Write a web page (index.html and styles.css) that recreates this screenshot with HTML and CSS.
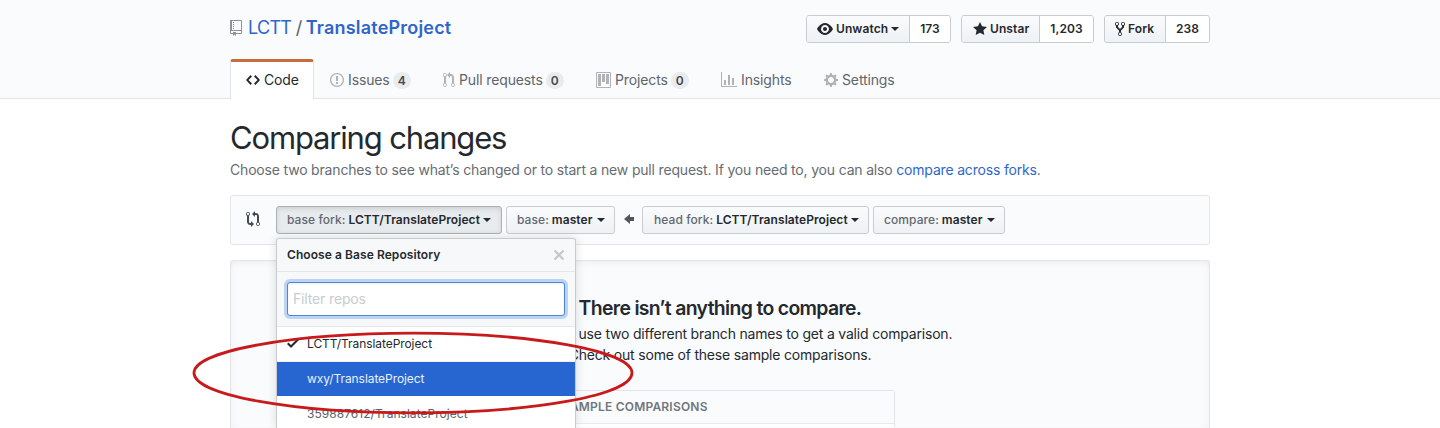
FILE: index.html
```html
<!DOCTYPE html>
<html lang="en">
<head>
<meta charset="utf-8">
<title>Comparing changes · LCTT/TranslateProject</title>
<link rel="stylesheet" href="styles.css">
</head>
<body>
<header class="repohead">
  <div class="container">
    <div class="repo-top">
      <h1 class="repo-title">
        <svg class="icon repo-icon" width="12" height="16" viewBox="0 0 12 16"><path fill-rule="evenodd" d="M4 9H3V8h1v1zm0-3H3v1h1V6zm0-2H3v1h1V4zm0-2H3v1h1V2zm8-1v12c0 .55-.45 1-1 1H6v2l-1.5-1.5L3 16v-2H1c-.55 0-1-.45-1-1V1c0-.55.45-1 1-1h10c.55 0 1 .45 1 1zm-1 10H1v2h2v-1h3v1h5v-2zm0-10H2v9h9V1z"/></svg>
        <a class="owner">LCTT</a><span class="slash">/</span><a class="name">TranslateProject</a>
      </h1>
      <div class="actions">
        <div class="action watch"><span class="action-btn"><svg class="icon" width="16" height="16" viewBox="0 0 16 16"><path fill-rule="evenodd" d="M8.06 2C3 2 0 8 0 8s3 6 8.06 6C13 14 16 8 16 8s-3-6-7.94-6zM8 12c-2.2 0-4-1.78-4-4 0-2.2 1.8-4 4-4 2.22 0 4 1.8 4 4 0 2.22-1.78 4-4 4zm2-4c0 1.11-.89 2-2 2-1.11 0-2-.89-2-2 0-1.11.89-2 2-2 1.11 0 2 .89 2 2z"/></svg><b>Unwatch</b><i class="caret"></i></span><span class="count">173</span></div>
        <div class="action star"><span class="action-btn"><svg class="icon" width="14" height="16" viewBox="0 0 14 16"><path d="M14 6l-4.9-.64L7 1 4.9 5.36 0 6l3.6 3.26L2.67 14 7 11.67 11.33 14l-.93-4.74z"/></svg><b>Unstar</b></span><span class="count">1,203</span></div>
        <div class="action fork"><span class="action-btn"><svg class="icon" width="10" height="16" viewBox="0 0 10 16"><path fill-rule="evenodd" d="M8 1a1.993 1.993 0 0 0-1 3.72V6L5 8 3 6V4.72A1.993 1.993 0 0 0 2 1a1.993 1.993 0 0 0-1 3.72V6.5l3 3v1.78A1.993 1.993 0 0 0 5 15a1.993 1.993 0 0 0 1-3.72V9.5l3-3V4.72A1.993 1.993 0 0 0 8 1zM2 4.2C1.34 4.2.8 3.65.8 3c0-.65.55-1.2 1.2-1.2.65 0 1.2.55 1.2 1.2 0 .65-.55 1.2-1.2 1.2zm3 10c-.66 0-1.2-.55-1.2-1.2 0-.65.55-1.2 1.2-1.2.65 0 1.2.55 1.2 1.2 0 .65-.55 1.2-1.2 1.2zm3-10c-.66 0-1.2-.55-1.2-1.2 0-.65.55-1.2 1.2-1.2.65 0 1.2.55 1.2 1.2 0 .65-.55 1.2-1.2 1.2z"/></svg><b>Fork</b></span><span class="count">238</span></div>
      </div>
    </div>
    <nav class="tabs">
      <a class="tab tab-code selected"><svg class="icon" width="14" height="16" viewBox="0 0 14 16"><path d="M9.5 3L8 4.5 11.5 8 8 11.5 9.5 13 14 8 9.5 3zm-5 0L0 8l4.5 5L6 11.5 2.5 8 6 4.5 4.5 3z"/></svg><span>Code</span></a>
      <a class="tab tab-issues"><svg class="icon" width="14" height="16" viewBox="0 0 14 16"><path fill-rule="evenodd" d="M7 2.3c3.14 0 5.7 2.56 5.7 5.7s-2.56 5.7-5.7 5.7A5.71 5.71 0 0 1 1.3 8c0-3.14 2.56-5.7 5.7-5.7zM7 1C3.14 1 0 4.14 0 8s3.14 7 7 7 7-3.14 7-7-3.14-7-7-7zm1 3H6v5h2V4zm0 6H6v2h2v-2z"/></svg><span>Issues</span><em class="counter">4</em></a>
      <a class="tab tab-pulls"><svg class="icon" width="12" height="16" viewBox="0 0 12 16"><path fill-rule="evenodd" d="M11 11.28V5c-.03-.78-.34-1.47-.94-2.06C9.46 2.35 8.78 2.03 8 2H7V0L4 3l3 3V4h1c.27.02.48.11.69.31.21.2.3.42.31.69v6.28A1.993 1.993 0 0 0 10 15a1.993 1.993 0 0 0 1-3.72zm-1 2.92c-.66 0-1.2-.55-1.2-1.2 0-.65.55-1.2 1.2-1.2.65 0 1.2.55 1.2 1.2 0 .65-.55 1.2-1.2 1.2zM4 3c0-1.11-.89-2-2-2a1.993 1.993 0 0 0-1 3.72v6.56A1.993 1.993 0 0 0 2 15a1.993 1.993 0 0 0 1-3.72V4.72c.59-.34 1-.98 1-1.72zm-.8 10c0 .66-.55 1.2-1.2 1.2-.65 0-1.2-.55-1.2-1.2 0-.65.55-1.2 1.2-1.2.65 0 1.2.55 1.2 1.2zM2 4.2C1.34 4.2.8 3.65.8 3c0-.65.55-1.2 1.2-1.2.65 0 1.2.55 1.2 1.2 0 .65-.55 1.2-1.2 1.2z"/></svg><span>Pull requests</span><em class="counter">0</em></a>
      <a class="tab tab-projects"><svg class="icon" width="15" height="16" viewBox="0 0 15 16"><path fill-rule="evenodd" d="M10 12h3V2h-3v10zm-4-2h3V2H6v8zm-4 4h3V2H2v12zm-1 1h13V1H1v14zM14 0H1a1 1 0 0 0-1 1v14a1 1 0 0 0 1 1h13a1 1 0 0 0 1-1V1a1 1 0 0 0-1-1z"/></svg><span>Projects</span><em class="counter">0</em></a>
      <a class="tab tab-insights"><svg class="icon" width="16" height="16" viewBox="0 0 16 16"><path d="M16 14v1H0V0h1v14h15zM5 13H3V8h2v5zm4 0H7V3h2v10zm4 0h-2V6h2v7z"/></svg><span>Insights</span></a>
      <a class="tab tab-settings"><svg class="icon" width="14" height="16" viewBox="0 0 14 16"><path fill-rule="evenodd" d="M14 8.77v-1.6l-1.94-.64-.45-1.09.88-1.84-1.13-1.13-1.81.91-1.09-.45-.69-1.92h-1.6l-.63 1.94-1.11.45-1.84-.88-1.13 1.13.91 1.81-.45 1.09L0 7.23v1.59l1.94.64.45 1.09-.88 1.84 1.13 1.13 1.81-.91 1.09.45.69 1.92h1.59l.63-1.94 1.11-.45 1.84.88 1.13-1.13-.92-1.81.47-1.09L14 8.75v.02zM7 11c-1.66 0-3-1.34-3-3s1.34-3 3-3 3 1.34 3 3-1.34 3-3 3z"/></svg><span>Settings</span></a>
    </nav>
  </div>
</header>

<main class="container">
  <h2 class="page-title">Comparing changes</h2>
  <p class="page-desc">Choose two branches to see what’s changed or to start a new pull request. If you need to, you can also <a class="link">compare across forks</a>.</p>

  <div class="range">
    <svg class="icon compare-icon" width="14" height="16" viewBox="0 0 14 16"><path fill-rule="evenodd" d="M5 12H4c-.27-.02-.48-.11-.69-.31-.21-.2-.3-.42-.31-.69V4.72A1.993 1.993 0 0 0 2 1a1.993 1.993 0 0 0-1 3.72V11c.03.78.34 1.47.94 2.06.6.59 1.28.91 2.06.94h1v2l3-3-3-3v2zM2 1.8c.66 0 1.2.55 1.2 1.2 0 .65-.55 1.2-1.2 1.2C1.35 4.2.8 3.65.8 3c0-.65.55-1.2 1.2-1.2zm11 9.48V5c-.03-.78-.34-1.47-.94-2.06-.6-.59-1.28-.91-2.06-.94H9V0L6 3l3 3V4h1c.27.02.48.11.69.31.21.2.3.42.31.69v6.28A1.993 1.993 0 0 0 12 15a1.993 1.993 0 0 0 1-3.72zm-1 2.92c-.66 0-1.2-.55-1.2-1.2 0-.65.55-1.2 1.2-1.2.65 0 1.2.55 1.2 1.2 0 .65-.55 1.2-1.2 1.2z"/></svg>
    <div class="select-wrap">
      <span class="select base-fork active"><span>base fork:</span><b>LCTT/TranslateProject</b><i class="caret"></i></span>
      <div class="menu">
        <div class="menu-head"><b>Choose a Base Repository</b><svg class="icon" width="12" height="16" viewBox="0 0 12 16"><path d="M7.48 8l3.75 3.75-1.48 1.48L6 9.48l-3.75 3.75-1.48-1.48L4.52 8 .77 4.25l1.48-1.48L6 6.52l3.75-3.75 1.48 1.48z"/></svg></div>
        <div class="menu-filter"><div class="filter-input">Filter repos</div></div>
        <div class="menu-item checked"><svg class="icon" width="12" height="16" viewBox="0 0 12 16"><path d="M12 5l-8 8-4-4 1.5-1.5L4 10l6.5-6.5z"/></svg><span>LCTT/TranslateProject</span></div>
        <div class="menu-item current"><span>wxy/TranslateProject</span></div>
        <div class="menu-item last"><span>359887612/TranslateProject</span></div>
      </div>
    </div>
    <span class="select base"><span>base:</span><b>master</b><i class="caret"></i></span>
    <svg class="icon arrow" width="10" height="16" viewBox="0 0 10 16"><path d="M6 3L0 8l6 5v-3h4V6H6z"/></svg>
    <span class="select head-fork"><span>head fork:</span><b>LCTT/TranslateProject</b><i class="caret"></i></span>
    <span class="select compare"><span>compare:</span><b>master</b><i class="caret"></i></span>
  </div>

  <section class="blank">
    <h3 class="blank-title">There isn’t anything to compare.</h3>
    <p class="blank-text">You’ll need to use two different branch names to get a valid comparison.</p>
    <p class="blank-text">Check out some of these sample comparisons.</p>
    <div class="samples"><div class="samples-head">SAMPLE COMPARISONS</div></div>
  </section>
</main>

<svg class="annotation" width="446" height="88" viewBox="0 0 446 88"><ellipse cx="223" cy="44" rx="219" ry="39.8"/></svg>
</body>
</html>
```
FILE: styles.css
```css
* { box-sizing: border-box; }
body {
  margin: 0;
  background: #fff;
  color: #25292e;
  font: 14px/21px Inter, "Liberation Sans", sans-serif;
}
h1, h2, h3, p { margin: 0; font-weight: 400; }
b { font-weight: 600; }
.icon { display: block; flex: none; fill: currentColor; }
.container { width: 980px; margin: 0 auto; }
.caret {
  flex: none;
  width: 0; height: 0;
  border: 4px solid transparent;
  border-top-color: currentColor;
  border-bottom-width: 0;
}

/* Repository header */
.repohead { height: 99px; background: #fafbfd; border-bottom: 1px solid #e1e4e8; }
.repo-top { display: flex; justify-content: space-between; height: 59px; padding-top: 15px; }
.repo-title { display: flex; align-items: center; height: 26px; font-size: 18px; color: #2f66c9; }
.repo-title > a, .slash { padding-bottom: 1px; }
.repo-icon { color: #8f9499; margin: 0 6px 0 0; }
.owner { letter-spacing: -.7px; }
.slash { color: #586069; margin: 0 3.5px 0 4.5px; }
.name { font-weight: 600; letter-spacing: .2px; }
.actions { display: flex; gap: 10px; }
.action { display: flex; height: 28px; font-size: 12px; font-weight: 600; letter-spacing: .1px; border: 1px solid #c9cccf; border-radius: 3px; overflow: hidden; }
.action-btn { display: flex; align-items: center; padding: 0 0 1px 10px; background: linear-gradient(#fafbfc, #eef1f5); border-right: 1px solid #c9cccf; }
.action-btn b { margin-left: 3px; }
.action-btn .caret { margin-left: 3px; }
.count { flex: 1; display: flex; align-items: center; justify-content: center; padding-bottom: 1px; background: #fff; }
.watch { width: 145px; } .watch .action-btn { width: 103px; }
.star { width: 133px; } .star .action-btn { width: 78px; padding-left: 11px; }
.fork { width: 106px; } .fork .action-btn { width: 61px; }

.tabs { display: flex; height: 40px; }
.tab { display: flex; align-items: center; color: #5f656c; padding-top: 2px; letter-spacing: -.13px; }
.tab > span { padding-bottom: 1px; }
.tab .icon { color: #b0b3b6; margin-right: 4px; }
.tab.selected { width: 84px; padding: 0 0 1px 15px; background: #fff; color: #25292e; border: 1px solid #e1e4e8; border-top: 3px solid #c96b3c; border-bottom: 0; border-radius: 3px 3px 0 0; }
.tab.selected .icon { color: #25292e; }
.counter { height: 17px; min-width: 18px; margin-left: 4px; border-radius: 9px; background: #e9ebed; color: #43484e; font: 600 12px/17px Inter, sans-serif; text-align: center; }
.tab-issues { margin-left: 16px; width: 113px; }
.tab-pulls { width: 153px; }
.tab-projects { width: 125px; }
.tab-insights { width: 103px; }
.tab-issues .counter, .tab-pulls .counter, .tab-projects .counter { margin-left: 3px; }

/* Page heading */
.page-title { margin-top: 18px; font-size: 31px; line-height: 42px; letter-spacing: -1.16px; }
.page-desc { margin-top: 0; color: #676c72; letter-spacing: -.18px; white-space: nowrap; }
.link { color: #2f66c9; }

/* Branch range editor */
.range { display: flex; align-items: flex-start; height: 50px; margin-top: 15px; padding: 10px 15px; background: #fafbfd; border: 1px solid #e3e5e8; border-radius: 3px; }
.compare-icon { margin: 5px 16px 0 0; color: #444a51; }
.select-wrap { position: relative; margin-right: 4px; }
.select { display: flex; align-items: center; flex: none; height: 28px; padding: 0 0 1px 10px; font-size: 12px; letter-spacing: .07px; white-space: nowrap; color: #25292e; background: linear-gradient(#fafbfc, #eef1f5); border: 1px solid #c9cccf; border-radius: 3px; }
.select > span { color: #626870; font-weight: 500; margin-right: 3px; }
.select .caret { margin-left: 3px; }
.base .caret, .compare .caret { margin-left: 4px; }
.select.active { background: #e8ebee; border-color: #adb1b5; box-shadow: inset 0 2px 4px rgba(27,31,35,.13); }
.base-fork { width: 226px; }
.base { width: 109px; }
.head-fork { width: 227px; padding-left: 11px; }
.compare { width: 132px; margin-left: 4px; }
.arrow { margin: 5px 8px 0 9px; color: #50565c; }

/* Repository menu, opened over the page */
.menu { position: absolute; z-index: 2; top: 32px; left: 0; width: 300px; height: 190px; background: #fff; border: 1px solid #c8cacd; border-bottom: 0; border-radius: 3px 3px 0 0; box-shadow: 0 0 10px rgba(27,31,35,.15); clip-path: inset(-12px -12px 0 -12px); font-size: 12px; }
.menu-head { display: flex; align-items: center; justify-content: space-between; height: 33px; padding: 0 10px; background: #f6f8fa; border-bottom: 1px solid #e4e6e9; border-radius: 3px 3px 0 0; }
.menu-head b { padding-bottom: 2px; letter-spacing: .07px; }
.menu-head .icon { color: #c4c7ca; }
.menu-filter { height: 55px; padding: 10px; background: #f7f8fa; border-bottom: 1px solid #e4e6e9; }
.filter-input { height: 34px; padding: 0 5px; border: 1px solid #4a86dc; border-radius: 3px; background: #fff; box-shadow: inset 0 1px 2px rgba(27,31,35,.08), 0 0 0 3px #bcd3f4; color: #c9ccd0; font-size: 14px; line-height: 31px; letter-spacing: -.15px; }
.menu-item { display: flex; align-items: center; height: 35px; padding-left: 30px; border-bottom: 1px solid #eceef0; color: #5c6168; letter-spacing: -.07px; }
.menu-item.checked { height: 35px; padding: 0 0 2px 10px; color: #25292e; }
.menu-item.checked .icon { margin-right: 8px; }
.menu-item.current { height: 34px; background: #2766d0; border-color: #2766d0; color: #e9f0fb; }
.menu-item.last { height: 32px; padding-top: 3px; border-bottom: 0; letter-spacing: .04px; }

/* Empty comparison */
.blank { height: 168px; margin-top: 15px; padding-top: 32px; background: #fafbfd; border: 1px solid #e3e5e8; border-bottom: 0; border-radius: 3px 3px 0 0; box-shadow: inset 0 6px 10px -6px rgba(27,31,35,.07), inset 6px 0 10px -6px rgba(27,31,35,.05), inset -6px 0 10px -6px rgba(27,31,35,.05); text-align: center; }
.blank-title { font-size: 19.4px; line-height: 30px; font-weight: 600; letter-spacing: -.66px; }
.blank-text { line-height: 21px; letter-spacing: -.19px; }
.samples { width: 350px; height: 37px; margin: 25px auto 0; border: 1px solid #e1e4e8; border-bottom: 0; border-radius: 3px 3px 0 0; background: #fff; text-align: left; }
.samples-head { height: 33px; padding-left: 16px; border-bottom: 1px solid #e8eaed; background: #fafbfd; color: #71767c; font-size: 12px; font-weight: 600; letter-spacing: .2px; line-height: 31px; }

.annotation { position: absolute; z-index: 3; left: 190px; top: 328.5px; height: 88px; fill: none; stroke: #c81a1a; stroke-width: 2.8; }
```
